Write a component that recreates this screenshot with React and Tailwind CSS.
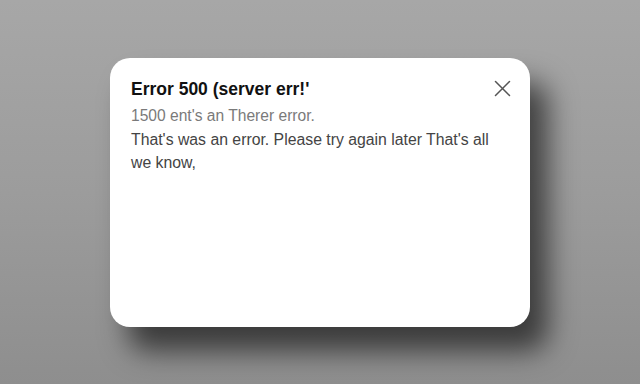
import React from "react";

function CloseIcon() {
  return (
    <svg width="17" height="17" viewBox="0 0 17 17" fill="none" stroke="#555" strokeWidth="1.5" strokeLinecap="round">
      <path d="M1.5 1.5 L15.5 15.5 M15.5 1.5 L1.5 15.5" />
    </svg>
  );
}

export default function App() {
  return (
    <div
      className="w-[640px] h-[384px] flex items-center justify-center bg-gradient-to-b from-[#a7a7a7] via-[#9c9c9c] to-[#8e8e8e]"
      style={{ fontFamily: '"Liberation Sans", Arial, sans-serif' }}
    >
      <div className="w-[420px] h-[269px] bg-white rounded-[20px] shadow-[18px_24px_28px_rgba(0,0,0,0.6)] pl-[21px] pr-[19px] pt-[19px] flex flex-col">
        <div className="flex items-start justify-between">
          <h1 className="text-[17.5px] font-bold text-[#111] leading-[24px]">Error 500 (server err!'</h1>
          <div className="mt-[3px]">
            <CloseIcon />
          </div>
        </div>
        <p className="text-[15.6px] leading-[23px] text-[#7a7a7a] mt-[3px]">1500 ent's an Therer error.</p>
        <p className="text-[15.8px] leading-[23px] text-[#444] w-[362px] mt-[1px]">
          That's was an error. Please try again later That's all we know,
        </p>
      </div>
    </div>
  );
}
